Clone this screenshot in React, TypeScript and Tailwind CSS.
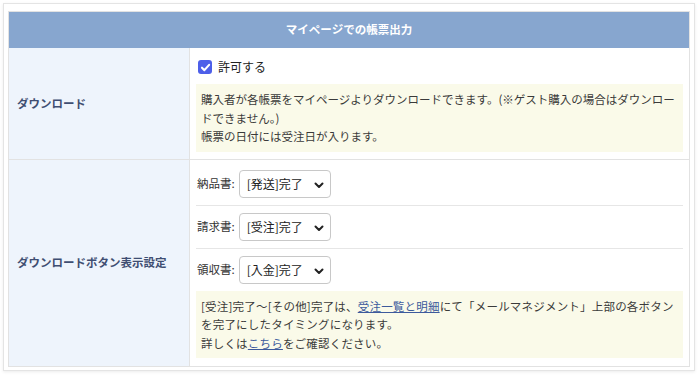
import React from 'react';

const font = { fontFamily: '"Noto Sans CJK JP", "Noto Sans", sans-serif' };

function Chevron() {
  return (
    <svg width="10" height="7" viewBox="0 0 10 7" className="absolute right-[6px] top-[11px]">
      <polyline points="1.5,1.5 5,5 8.5,1.5" fill="none" stroke="#222" strokeWidth="2" strokeLinecap="round" strokeLinejoin="round" />
    </svg>
  );
}

function SelectRow({ label, value, last }: { label: string; value: string; last?: boolean }) {
  return (
    <div className={`flex items-center py-[7px] ${last ? '' : 'border-b border-[#e6e6e6]'}`}>
      <span className="pl-[1px] pr-[4px] text-[#333]">{label}</span>
      <div className="relative w-[92px] h-[28px] rounded-[4px] border border-[#c8c8c8] bg-white flex items-center pl-[7px] text-[#222] text-[12px]">
        {value}
        <Chevron />
      </div>
    </div>
  );
}

export default function App() {
  return (
    <div className="bg-white w-[700px] h-[376px] pt-[3px]" style={font}>
      <div className="ml-[3px] w-[692px] border border-[#e4e4e4] shadow-[0_1px_3px_rgba(0,0,0,0.08)] px-[4px] pt-[7px] pb-[3px] text-[11.5px]">
        <div className="border border-[#e2e2e2]">
          <div className="h-[36px] bg-[#87a6cf] flex items-center justify-center text-white font-bold">
            マイページでの帳票出力
          </div>

          <div className="flex border-b border-[#e2e2e2]">
            <div className="w-[181px] bg-[#eef4fc] border-r border-[#e2e2e2] flex items-center pl-[8px] font-bold text-[#3f4e72]">
              ダウンロード
            </div>
            <div className="flex-1 px-[6px] pt-[4px] pb-[7px]">
              <div className="h-[32px] flex items-center gap-[6px] pl-[2px] pb-[2px]">
                <span className="w-[14px] h-[14px] rounded-[3px] bg-[#4d5fe9] flex items-center justify-center">
                  <svg width="11" height="11" viewBox="0 0 10 10">
                    <polyline points="1.8,5.2 4,7.4 8.3,2.6" fill="none" stroke="white" strokeWidth="1.9" strokeLinecap="round" strokeLinejoin="round" />
                  </svg>
                </span>
                <span className="text-[#222] text-[12px]">許可する</span>
              </div>
              <div className="bg-[#fafae9] px-[5px] py-[6px] leading-[18.5px] text-[#3a3a3a]">
                <div className="whitespace-nowrap">購入者が各帳票をマイページよりダウンロードできます。(※ゲスト購入の場合はダウンロー</div>
                <div>ドできません。)</div>
                <div>帳票の日付には受注日が入ります。</div>
              </div>
            </div>
          </div>

          <div className="flex">
            <div className="w-[181px] bg-[#eef4fc] border-r border-[#e2e2e2] flex items-center pl-[8px] font-bold text-[#3f4e72]">
              ダウンロードボタン表示設定
            </div>
            <div className="flex-1 px-[6px] pt-[3px] pb-[8px]">
              <SelectRow label="納品書:" value="[発送]完了" />
              <SelectRow label="請求書:" value="[受注]完了" />
              <SelectRow label="領収書:" value="[入金]完了" last />
              <div className="bg-[#fafae9] px-[5px] py-[6px] leading-[18.5px] text-[#3a3a3a] tracking-[0.2px]">
                <div className="whitespace-nowrap">
                  [受注]完了〜[その他]完了は、<span className="text-[#3d5a9c] underline">受注一覧と明細</span>にて「メールマネジメント」上部の各ボタン
                </div>
                <div>を完了にしたタイミングになります。</div>
                <div>
                  詳しくは<span className="text-[#3d5a9c] underline">こちら</span>をご確認ください。
                </div>
              </div>
            </div>
          </div>
        </div>
      </div>
    </div>
  );
}
